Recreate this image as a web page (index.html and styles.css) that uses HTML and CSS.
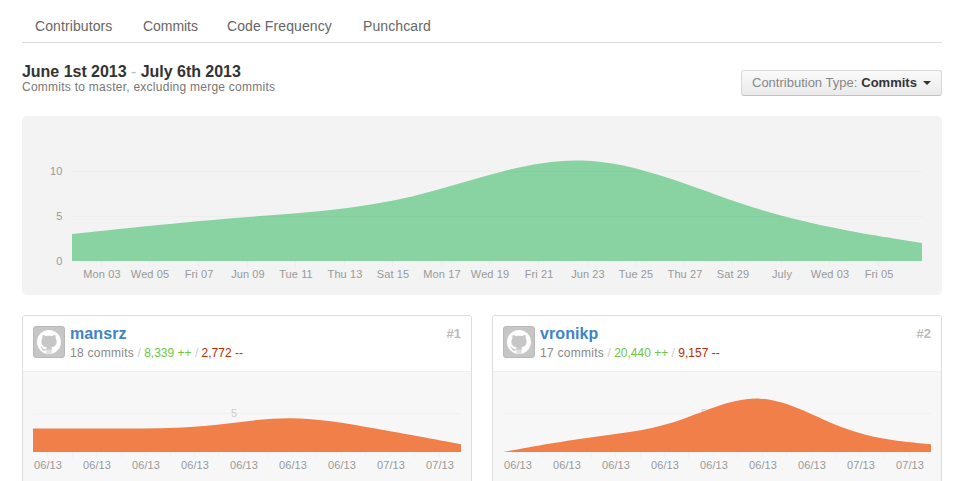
FILE: index.html
```html
<!DOCTYPE html>
<html lang="en">
<head>
<meta charset="utf-8">
<title>Contributors</title>
<link rel="stylesheet" href="styles.css">
</head>
<body>
<svg class="defs" width="0" height="0" aria-hidden="true">
  <symbol id="octocat" viewBox="0 0 16 16">
    <path d="M8 0C3.58 0 0 3.58 0 8c0 3.54 2.29 6.53 5.47 7.59.4.07.55-.17.55-.38 0-.19-.01-.82-.01-1.49-2.01.37-2.53-.49-2.69-.94-.09-.23-.48-.94-.82-1.13-.28-.15-.68-.52-.01-.53.63-.01 1.08.58 1.23.82.72 1.21 1.87.87 2.33.66.07-.52.28-.87.51-1.07-1.78-.2-3.64-.89-3.64-3.95 0-.87.31-1.59.82-2.15-.08-.2-.36-1.02.08-2.12 0 0 .67-.21 2.2.82.64-.18 1.32-.27 2-.27s1.36.09 2 .27c1.53-1.04 2.2-.82 2.2-.82.44 1.1.16 1.92.08 2.12.51.56.82 1.27.82 2.15 0 3.07-1.87 3.75-3.65 3.95.29.25.54.73.54 1.48 0 1.07-.01 1.93-.01 2.2 0 .21.15.46.55.38A8.01 8.01 0 0 0 16 8c0-4.42-3.58-8-8-8z"/>
    <path class="legs" d="M6 13h.8v3H6zM7.1 13h.7v3h-.7zM8.2 13h.7v3h-.7zM9.2 13h.8v3h-.8z"/>
  </symbol>
</svg>
<div class="page">
  <nav class="tabs">
    <a>Contributors</a><a>Commits</a><a>Code Frequency</a><a>Punchcard</a>
  </nav>
  <header class="heading">
    <div>
      <h1>June 1st 2013 <span class="dash">-</span> July 6th 2013</h1>
      <p>Commits to master, excluding merge commits</p>
    </div>
    <button class="select"><span>Contribution Type:</span> <b>Commits</b><i class="caret"></i></button>
  </header>
  <section class="overview">
    <svg id="overview" width="920" height="179"></svg>
  </section>
  <div class="people">
    <article class="card">
      <div class="person">
        <span class="avatar"><svg width="24" height="24"><use href="#octocat"/></svg></span>
        <div class="info">
          <h2>mansrz</h2>
          <p><span class="count">18 commits</span> <s>/</s> <span class="add">8,339 ++</span> <s>/</s> <span class="del">2,772 --</span></p>
        </div>
        <span class="rank">#1</span>
      </div>
      <svg class="chart" data-values="3,3,3,5,3,1" width="448" height="120"></svg>
    </article>
    <article class="card">
      <div class="person">
        <span class="avatar"><svg width="24" height="24"><use href="#octocat"/></svg></span>
        <div class="info">
          <h2>vronikp</h2>
          <p><span class="count">17 commits</span> <s>/</s> <span class="add">20,440 ++</span> <s>/</s> <span class="del">9,157 --</span></p>
        </div>
        <span class="rank">#2</span>
      </div>
      <svg class="chart" data-values="0,2,3,9,2,1" width="448" height="120"></svg>
    </article>
  </div>
</div>
<script src="charts.js"></script>
</body>
</html>
```
FILE: styles.css
```css
* { box-sizing: border-box; }
body { margin: 0; background: #fff; font-family: "Liberation Sans", Arial, sans-serif; color: #333; height: 481px; overflow: hidden; }
h1, h2, p { margin: 0; }
.defs { position: absolute; }
.page { width: 920px; margin-left: 22px; }

.tabs { display: grid; grid-template-columns: 78px 54px 106px 68px; gap: 30px; height: 43px; padding: 18px 13px 0; border-bottom: 1px solid #ddd; font-size: 14px; line-height: 17px; letter-spacing: .1px; color: #666; white-space: nowrap; }
.tabs a:nth-child(2) { letter-spacing: -.05px; }

.heading { display: flex; justify-content: space-between; height: 73px; padding-top: 19px; }
h1 { padding-top: 1px; font-size: 16px; line-height: 17px; letter-spacing: -.03px; color: #333; }
.dash { font-weight: normal; color: #bbb; }
.heading p { font-size: 12px; line-height: 14px; color: #777; letter-spacing: .25px; }
.select { display: flex; align-items: center; width: 201px; height: 26px; margin-top: 8px; padding: 0 10px; border: 1px solid #d8d8d8; border-bottom-color: #c2c2c2; border-radius: 3px; background: linear-gradient(#fafafa, #eaeaea); font: 13px/24px "Liberation Sans", Arial, sans-serif; color: #333; white-space: nowrap; }
.select span { color: #888; margin-right: 4px; }
.caret { margin-left: auto; border: 4px solid transparent; border-top-color: #333; border-bottom: 0; }

.overview { height: 179px; border-radius: 5px; background: #f3f3f3; }
svg { display: block; }
svg text { font-size: 11px; fill: #999; letter-spacing: .1px; }
.mid { text-anchor: middle; }
.end { text-anchor: end; }
.rule { fill: #000; fill-opacity: .025; }
.green { fill: #88d3a1; }
.orange { fill: #f17f49; }
svg text.faint { fill: #ccc; }

.people { display: grid; grid-template-columns: 450px 450px; gap: 20px; margin-top: 20px; }
.card { height: 180px; border: 1px solid #ddd; border-radius: 3px; background: #f7f7f7; overflow: hidden; }
.person { display: flex; height: 56px; padding: 10px 10px 0; background: #fff; border-bottom: 1px solid #eee; }
.avatar { width: 32px; height: 32px; padding: 3px; border: 1px solid #b9b9b9; border-radius: 3px; background: #c6c6c6; }
.avatar svg { fill: #fff; }
.legs { fill: #fff; fill-opacity: .7; }
.info { flex: 1; padding-left: 5px; }
h2 { font-size: 16px; line-height: 16px; letter-spacing: .1px; color: #4183c4; }
.info p { font-size: 12px; line-height: 14px; margin-top: 4px; color: #888; white-space: nowrap; }
.count { letter-spacing: .28px; }
s { color: #ccc; text-decoration: none; }
.add { color: #6cc644; }
.del { color: #bd2c00; }
.rank { font-size: 13px; font-weight: bold; line-height: 16px; color: #bbb; }
```
FILE: charts.js
```js
// Area outline of a uniform B-spline through weekly totals.
function area(values, x0, step, base, unit) {
  const p = values.map((v, i) => [x0 + i * step, base - v * unit]);
  const n = p.length - 1;
  const mix = (a, b, t) => [a[0] + (b[0] - a[0]) * t, a[1] + (b[1] - a[1]) * t];
  const knot = i => {
    const a = p[Math.max(i - 1, 0)], b = p[i], c = p[Math.min(i + 1, n)];
    return [(a[0] + 4 * b[0] + c[0]) / 6, (a[1] + 4 * b[1] + c[1]) / 6];
  };
  let d = `M${x0},${base}L${p[0]}L${knot(0)}`;
  for (let i = 0; i < n; i++) {
    d += `C${mix(p[i], p[i + 1], 1 / 3)} ${mix(p[i], p[i + 1], 2 / 3)} ${knot(i + 1)}`;
  }
  return d + `L${p[n]}V${base}Z`;
}

const rule = (x, y, w, h) => `<rect class="rule" x="${x}" y="${y}" width="${w}" height="${h}"/>`;
const label = (x, y, text, cls) => `<text class="${cls}" x="${x}" y="${y}">${text}</text>`;

const days = ["Mon 03", "Wed 05", "Fri 07", "Jun 09", "Tue 11", "Thu 13", "Sat 15", "Mon 17", "Wed 19",
  "Fri 21", "Jun 23", "Tue 25", "Thu 27", "Sat 29", "July", "Wed 03", "Fri 05"];

let out = `<path class="green" d="${area([3, 5, 6, 14, 5, 2], 50, 170, 145, 9)}"/>`;
out += rule(50, 55, 850, 1) + rule(50, 100, 850, 1);
out += label(40.5, 59, "10", "end") + label(40.5, 104, "5", "end") + label(40.5, 149, "0", "end");
days.forEach((day, i) => {
  const x = Math.floor(79.35 + i * 340 / 7);
  out += rule(x, 145, 1, 6) + label(x + 1, 162, day, "mid");
});
document.getElementById("overview").innerHTML = out;

document.querySelectorAll(".chart").forEach(svg => {
  const values = svg.dataset.values.split(",").map(Number);
  let s = rule(10, 41, 428, 1) + label(211, 45, "5", "mid faint");
  s += `<path class="orange" d="${area(values, 10, 85.6, 80, 7.8)}"/>`;
  for (let i = 0; i < 17; i++) {
    const x = Math.floor(24.75 + i * 171.2 / 7);
    s += rule(x, 81, 1, 5);
    if (i % 2 === 0) s += label(x + 1, 97, i < 14 ? "06/13" : "07/13", "mid");
  }
  svg.innerHTML = s;
});
```
